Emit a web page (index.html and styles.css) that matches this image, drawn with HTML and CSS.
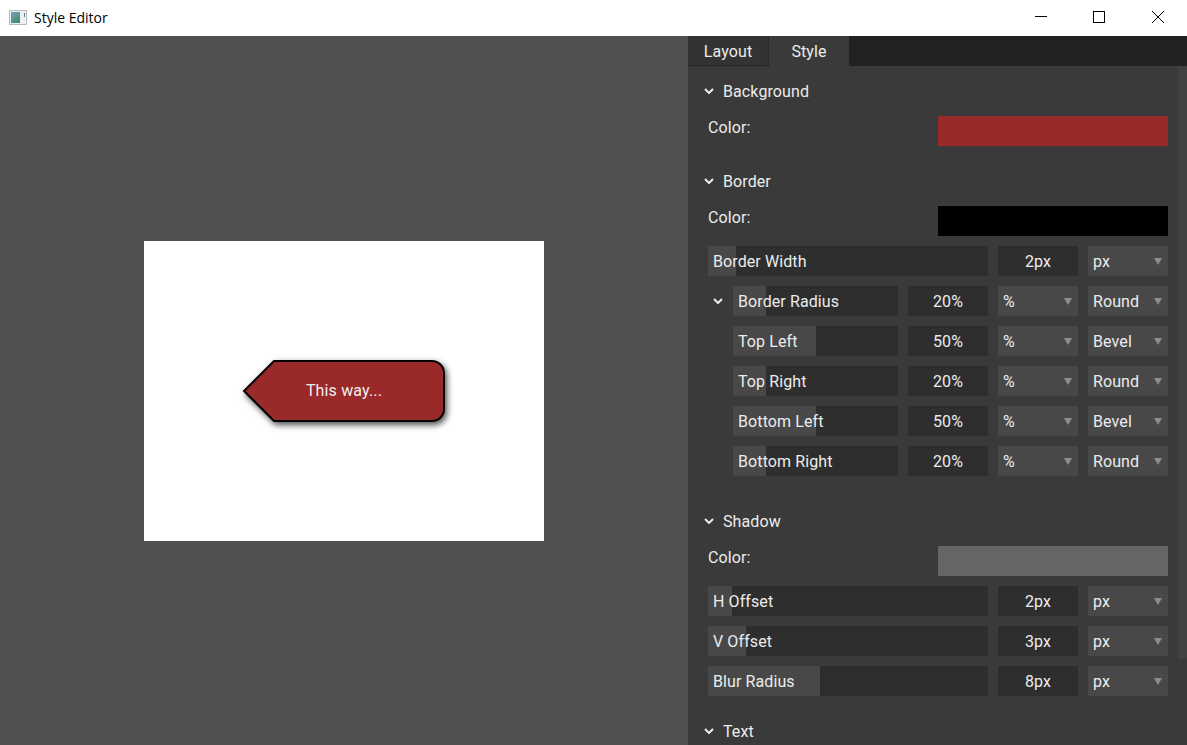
FILE: index.html
```html
<!DOCTYPE html>
<html lang="en">
<head>
  <meta charset="UTF-8" />
  <title>Style Editor</title>
  <link rel="stylesheet" href="styles.css">
</head>
<body>
  <header class="titlebar">
    <svg class="app-icon" width="18" height="15" viewBox="0 0 18 15">
      <defs>
        <linearGradient id="icon-grad" x1="0" y1="0" x2="0.600" y2="1">
          <stop offset="0" stop-color="#7f9fc0"/>
          <stop offset="1" stop-color="#3f8f6f"/>
        </linearGradient>
      </defs>
      <rect x="0.500" y="0.500" width="17" height="14" fill="#eef0f2" stroke="#b4b9be"/>
      <rect x="2" y="2" width="9" height="11" fill="url(#icon-grad)"/>
      <rect x="15" y="3" width="1" height="4" fill="#5f7f8f"/>
    </svg>
    <span class="app-title">Style Editor</span>
    <div class="win-buttons">
      <svg class="win-min" width="12" height="12" viewBox="0 0 12 12"><path d="M0 5.500h12" stroke="#000" fill="none"/></svg>
      <svg width="12" height="12" viewBox="0 0 12 12"><rect x="0.500" y="0.500" width="11" height="11" stroke="#000" fill="none"/></svg>
      <svg width="12" height="12" viewBox="0 0 12 12"><path d="M0 0L12 12M12 0L0 12" stroke="#000" fill="none"/></svg>
    </div>
  </header>

  <main class="app">
    <section class="canvas">
      <div class="card">
        <div class="arrow-button">
          <svg class="arrow-shape" width="200" height="60" viewBox="0 0 200 60">
            <path d="M30 0H188A12 12 0 0 1 200 12V48A12 12 0 0 1 188 60H30L0 30Z" fill="#9a2929" stroke="#000" stroke-width="2"/>
          </svg>
          <span class="arrow-label">This way...</span>
        </div>
      </div>
    </section>

    <aside class="panel">
      <nav class="tabs">
        <div class="tab">Layout</div>
        <div class="tab active">Style</div>
      </nav>
      <div class="panel-body">
        <div class="props">
          <div class="section-head"><svg class="chevron" width="10" height="6" viewBox="0 0 10 6"><path d="M1 1l4 4 4-4" /></svg>Background</div>
          <div class="color-row"><span>Color:</span><div class="swatch swatch-red"></div></div>

          <div class="section-head spaced"><svg class="chevron" width="10" height="6" viewBox="0 0 10 6"><path d="M1 1l4 4 4-4" /></svg>Border</div>
          <div class="color-row"><span>Color:</span><div class="swatch swatch-black"></div></div>
          <div class="row">
            <div class="slider"><div class="fill" style="width:10%"></div><span>Border Width</span></div>
            <div class="value">2px</div>
            <div class="select">px</div>
          </div>
          <div class="row sub">
            <svg class="chevron" width="10" height="6" viewBox="0 0 10 6"><path d="M1 1l4 4 4-4" /></svg>
            <div class="slider"><div class="fill" style="width:20%"></div><span>Border Radius</span></div>
            <div class="value">20%</div>
            <div class="select">%</div>
            <div class="select">Round</div>
          </div>
          <div class="row sub">
            <div class="slider"><div class="fill" style="width:50%"></div><span>Top Left</span></div>
            <div class="value">50%</div>
            <div class="select">%</div>
            <div class="select">Bevel</div>
          </div>
          <div class="row sub">
            <div class="slider"><div class="fill" style="width:20%"></div><span>Top Right</span></div>
            <div class="value">20%</div>
            <div class="select">%</div>
            <div class="select">Round</div>
          </div>
          <div class="row sub">
            <div class="slider"><div class="fill" style="width:50%"></div><span>Bottom Left</span></div>
            <div class="value">50%</div>
            <div class="select">%</div>
            <div class="select">Bevel</div>
          </div>
          <div class="row sub">
            <div class="slider"><div class="fill" style="width:20%"></div><span>Bottom Right</span></div>
            <div class="value">20%</div>
            <div class="select">%</div>
            <div class="select">Round</div>
          </div>

          <div class="section-head spaced after-group"><svg class="chevron" width="10" height="6" viewBox="0 0 10 6"><path d="M1 1l4 4 4-4" /></svg>Shadow</div>
          <div class="color-row"><span>Color:</span><div class="swatch swatch-grey"></div></div>
          <div class="row">
            <div class="slider"><div class="fill" style="width:8.500%"></div><span>H Offset</span></div>
            <div class="value">2px</div>
            <div class="select">px</div>
          </div>
          <div class="row">
            <div class="slider"><div class="fill" style="width:13.500%"></div><span>V Offset</span></div>
            <div class="value">3px</div>
            <div class="select">px</div>
          </div>
          <div class="row">
            <div class="slider"><div class="fill" style="width:40%"></div><span>Blur Radius</span></div>
            <div class="value">8px</div>
            <div class="select">px</div>
          </div>

          <div class="section-head spaced"><svg class="chevron" width="10" height="6" viewBox="0 0 10 6"><path d="M1 1l4 4 4-4" /></svg>Text</div>
        </div>
        <div class="scrollbar"></div>
      </div>
    </aside>
  </main>
</body>
</html>
```

FILE: styles.css
```css
html, body {
  margin: 0;
  height: 100%;
  overflow: hidden;
}

body {
  background-color: #3a3a3a;
  color: #ececec;
  font-family: Roboto, "Liberation Sans", sans-serif;
  font-size: 16px;
  letter-spacing: 0.1px;
  display: flex;
  flex-direction: column;
}

.titlebar {
  height: 36px;
  flex: none;
  box-sizing: border-box;
  padding: 0 0 2px 9px;
  background-color: #fff;
  color: #000;
  display: flex;
  align-items: center;
  font-family: "Open Sans", "Liberation Sans", sans-serif;
  font-size: 14px;
  letter-spacing: 0;
}

.app-icon {
  margin-right: 7px;
}

.win-buttons {
  margin-left: auto;
  display: flex;
  gap: 47px;
  padding-right: 23px;
}

.win-min {
  margin-right: -1px;
}

.app {
  flex: 1;
  display: flex;
  min-height: 0;
}

.canvas {
  width: 688px;
  flex: none;
  background-color: #505050;
  display: flex;
  align-items: center;
  justify-content: center;
}

.card {
  width: 400px;
  height: 300px;
  background-color: #fff;
  display: flex;
  align-items: center;
  justify-content: center;
}

.arrow-button {
  position: relative;
  width: 200px;
  height: 60px;
  display: flex;
  align-items: center;
  justify-content: center;
  color: #f0f0f0;
  letter-spacing: 0.15px;
}

.arrow-shape {
  position: absolute;
  left: 0;
  top: 0;
  overflow: visible;
  filter: drop-shadow(2px 3px 3px rgba(60, 60, 60, 0.9));
}

.arrow-label {
  position: relative;
}

.panel {
  flex: 1;
  min-width: 0;
  display: flex;
  flex-direction: column;
}

.tabs {
  height: 30px;
  flex: none;
  background-color: #222;
  display: flex;
}

.tab {
  width: 81px;
  box-sizing: border-box;
  padding-top: 1px;
  background-color: #333;
  border-right: 1px solid #272727;
  border-bottom: 1px solid #272727;
  display: flex;
  align-items: center;
  justify-content: center;
}

.tab.active {
  width: 80px;
  background-color: #3a3a3a;
  border: none;
}

.panel-body {
  flex: 1;
  min-height: 0;
  display: flex;
  overflow: hidden;
}

.props {
  flex: none;
  width: 460px;
  margin-left: 20px;
  padding-top: 10px;
  display: flex;
  flex-direction: column;
  gap: 10px;
}

.section-head {
  height: 30px;
  flex: none;
  display: flex;
  align-items: center;
  margin-left: -4px;
}

.section-head.spaced {
  margin-top: 10px;
}

.section-head.after-group {
  margin-top: 20px;
}

.chevron {
  flex: none;
  margin-right: 9px;
  fill: none;
  stroke: #ececec;
  stroke-width: 2;
}

.color-row {
  height: 30px;
  flex: none;
  display: flex;
  justify-content: space-between;
}

.color-row span {
  line-height: 23px;
}

.swatch {
  width: 230px;
  height: 30px;
}

.swatch-red { background-color: #9a2929; }
.swatch-black { background-color: #000; }
.swatch-grey { background-color: #666; }

.row {
  height: 30px;
  flex: none;
  display: flex;
  gap: 10px;
}

.row.sub {
  padding-left: 25px;
  position: relative;
}

.row.sub .chevron {
  position: absolute;
  left: 5px;
  top: 12px;
  margin: 0;
}

.slider {
  flex: 1;
  min-width: 0;
  position: relative;
  background-color: #2e2e2e;
  display: flex;
  align-items: center;
  padding-left: 5px;
}

.fill {
  position: absolute;
  left: 0;
  top: 0;
  bottom: 0;
  background-color: #484848;
}

.slider span {
  position: relative;
}

.value {
  width: 80px;
  flex: none;
  background-color: #2e2e2e;
  display: flex;
  align-items: center;
  justify-content: center;
}

.select {
  width: 80px;
  flex: none;
  box-sizing: border-box;
  background-color: #484848;
  display: flex;
  align-items: center;
  padding-left: 5px;
  position: relative;
}

.select::after {
  content: "";
  position: absolute;
  right: 6px;
  top: 12px;
  border-left: 4px solid transparent;
  border-right: 4px solid transparent;
  border-top: 7px solid #8c8c8c;
}

.scrollbar {
  flex: none;
  width: 9px;
  height: 593px;
  margin-left: auto;
  background-color: #424242;
}
```
